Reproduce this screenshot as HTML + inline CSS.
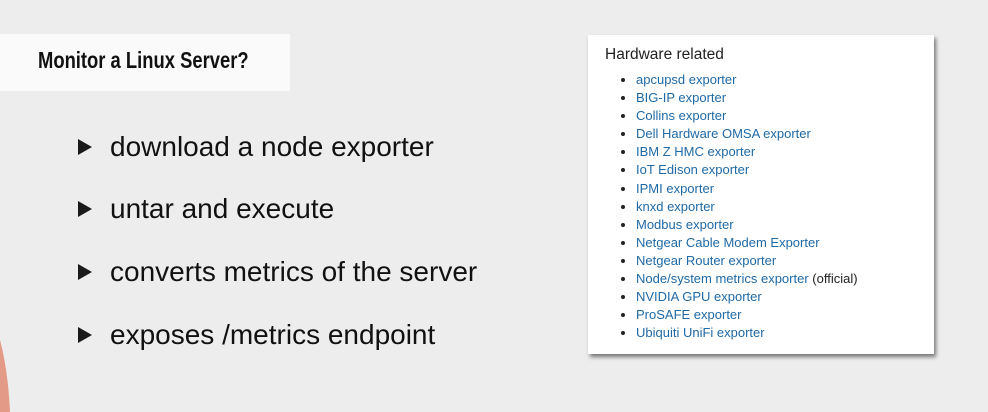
<!DOCTYPE html>
<html style="overflow:hidden;width:988px;height:412px"><head><style>
body{margin:0;width:988px;height:412px;background:#ededed;position:relative;overflow:hidden;font-family:"Liberation Sans",sans-serif}
.title{position:absolute;left:0;top:34px;width:290px;height:57px;background:#fafafa}
.title span{position:absolute;left:38px;top:13px;font-size:23px;font-weight:bold;color:#111;transform:scaleX(0.8);transform-origin:left;white-space:nowrap}
.b{position:absolute;left:78px;font-size:28px;color:#111;white-space:nowrap}
.b i{display:inline-block;width:0;height:0;border-left:14px solid #1a1a1a;border-top:8px solid transparent;border-bottom:8px solid transparent;margin-right:18px;vertical-align:1px}
.box{position:absolute;left:588px;top:35px;width:346px;height:319px;background:#fff;box-shadow:2px 3px 4px rgba(0,0,0,.5)}
.box h3{margin:0;position:absolute;left:17px;top:11px;font-size:15.5px;font-weight:normal;color:#222}
.box ul{position:absolute;left:31px;top:36px;margin:0;padding:0 0 0 17px;font-size:13px;line-height:18.1px;color:#222;white-space:nowrap}
.box li::marker{font-size:15px}
.box a{color:#1f69a6;text-decoration:none}
svg{position:absolute;left:0;top:340px}
</style></head><body>
<div class="title"><span>Monitor a Linux Server?</span></div>
<div class="b" style="top:131px"><i></i>download a node exporter</div>
<div class="b" style="top:193px"><i></i>untar and execute</div>
<div class="b" style="top:256px"><i></i>converts metrics of the server</div>
<div class="b" style="top:319px"><i></i>exposes /metrics endpoint</div>
<svg width="20" height="72"><path d="M0 0 Q8 30 10 72 L0 72 Z" fill="#e39a86"/></svg>
<div class="box"><h3>Hardware related</h3>
<ul>
<li><a>apcupsd exporter</a></li>
<li><a>BIG-IP exporter</a></li>
<li><a>Collins exporter</a></li>
<li><a>Dell Hardware OMSA exporter</a></li>
<li><a>IBM Z HMC exporter</a></li>
<li><a>IoT Edison exporter</a></li>
<li><a>IPMI exporter</a></li>
<li><a>knxd exporter</a></li>
<li><a>Modbus exporter</a></li>
<li><a>Netgear Cable Modem Exporter</a></li>
<li><a>Netgear Router exporter</a></li>
<li><a>Node/system metrics exporter</a> (official)</li>
<li><a>NVIDIA GPU exporter</a></li>
<li><a>ProSAFE exporter</a></li>
<li><a>Ubiquiti UniFi exporter</a></li>
</ul></div>
</body></html>
